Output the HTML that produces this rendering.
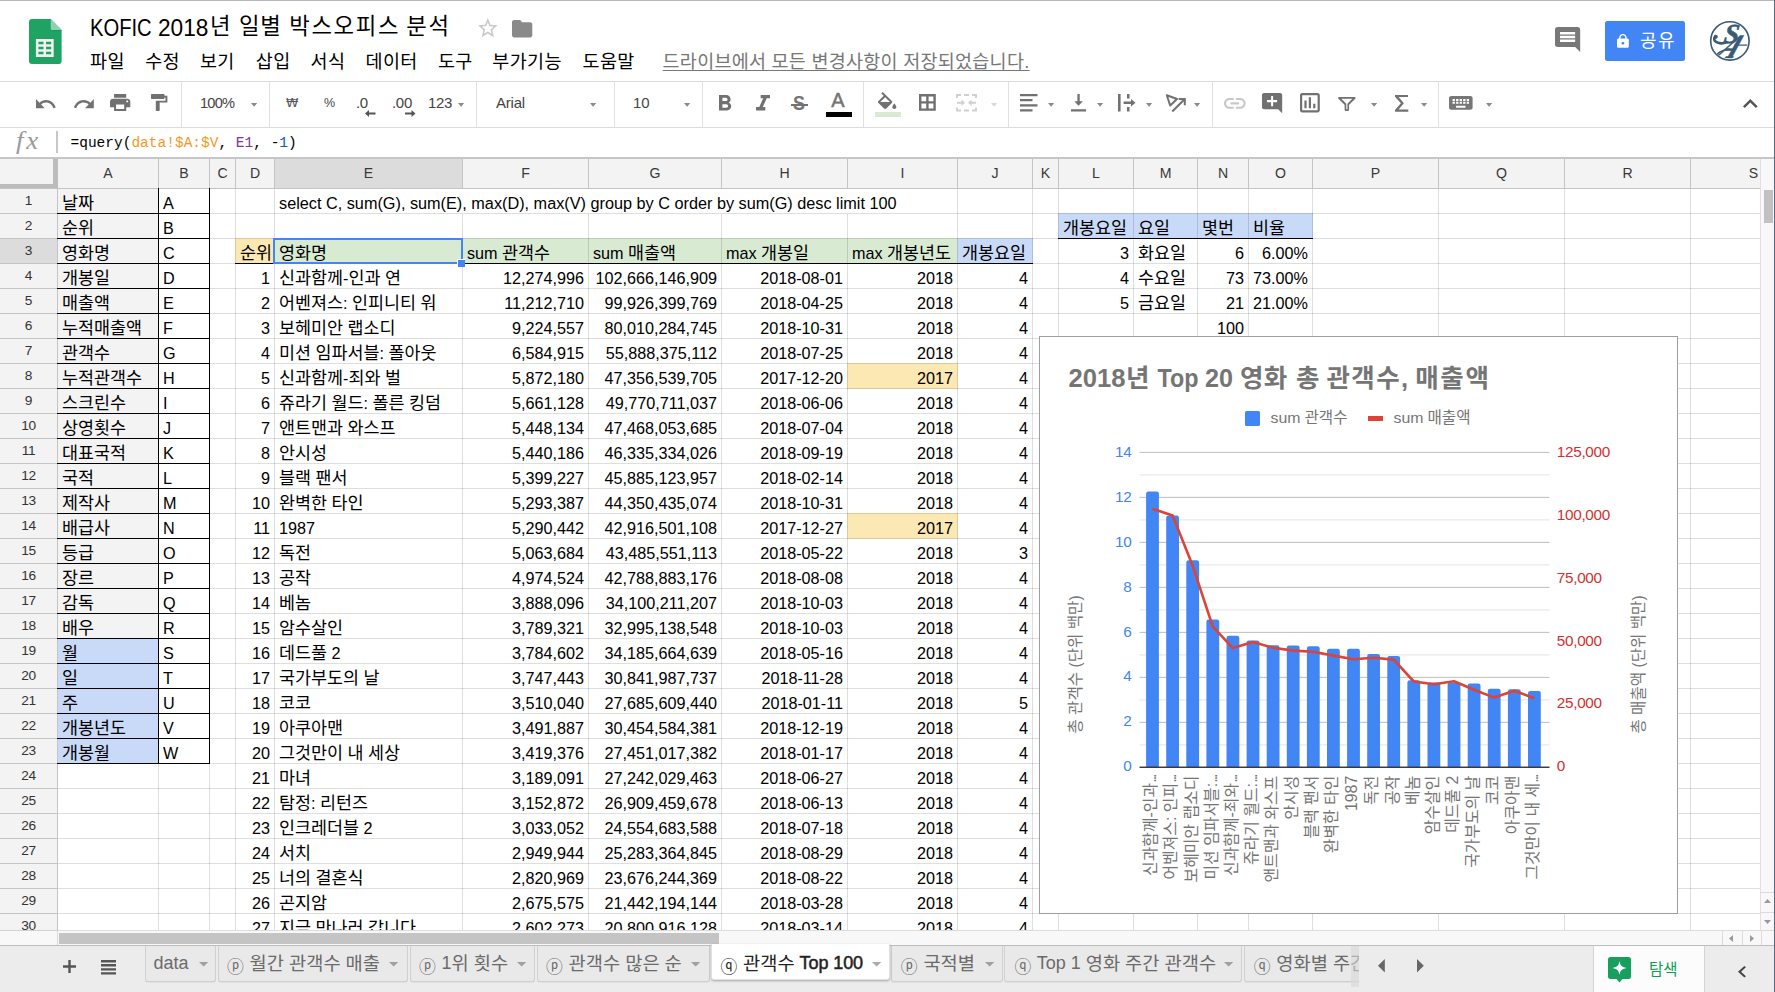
<!DOCTYPE html>
<html lang="ko"><head><meta charset="utf-8"><title>KOFIC 2018년 일별 박스오피스 분석</title>
<style>
*{box-sizing:border-box;margin:0;padding:0}
html,body{width:1775px;height:992px;overflow:hidden;background:#fff}
body{position:relative;font-family:"Liberation Sans","Noto Sans CJK KR",sans-serif;color:#000}
.ic{position:absolute;display:block;overflow:visible}
.a{position:absolute}
.t{position:absolute;white-space:nowrap}
/* cell text */
.c{position:absolute;height:25px;line-height:25px;font-size:16.2px;white-space:nowrap;padding:2px 4px 0 4px;overflow:visible}
.c.r{text-align:right}
.c.m{text-align:center}
.k{font-size:17.4px;line-height:0}
.f{position:absolute}
.vl{position:absolute;width:1px;background:rgba(0,0,0,.13)}
.hl{position:absolute;height:1px;background:rgba(0,0,0,.13)}
.bk{position:absolute;background:#000}
.ch{position:absolute;top:158px;height:30px;line-height:30px;text-align:center;font-size:15px;color:#383838;transform:scaleX(.94)}
.rh{position:absolute;left:0;width:57px;height:25px;line-height:23px;text-align:center;font-size:13.7px;letter-spacing:-.35px;color:#333}
.mn{position:absolute;top:49px;height:26px;line-height:26px;font-size:18.5px;letter-spacing:.35px;color:#000;white-space:nowrap}
.mn .k,.ttl .k{font-size:inherit}
.tab{position:absolute;top:945px;height:37px;background:#e9e9e9;border:1px solid #d0d0d0;border-top:none;border-radius:0 0 3px 3px;box-shadow:0 1px 0 rgba(0,0,0,.05)}
.tab.on{background:#fff;border-color:#e0e0e0;height:36px;top:944px;box-shadow:0 1px 2.5px rgba(0,0,0,.3)}
.tt{position:absolute;top:945px;height:37px;line-height:37px;font-size:18px;color:#666;white-space:nowrap}
.tt .k{font-size:18.7px;line-height:0;position:relative;top:1px}
.tt .o{position:relative;top:3.5px;line-height:0;font-size:16.8px;margin-right:.8px}
.tt b{letter-spacing:-.1px;font-weight:normal;-webkit-text-stroke:.5px #222}
</style></head>
<body>
<div class="a" style="left:0;top:0;width:1775px;height:1px;background:#b4b8bd"></div>
<svg class="ic" style="left:28.700px;top:19px" width="32.600" height="45" viewBox="0 0 33 45" preserveAspectRatio="none">
<path d="M3 0H22L33 11V42a3 3 0 0 1-3 3H3a3 3 0 0 1-3-3V3a3 3 0 0 1 3-3z" fill="#1ea362"/>
<path d="M22 0L33 11H23.5a1.5 1.5 0 0 1-1.5-1.5z" fill="#8ed1b1"/>
<path d="M22.5 11H33v1H23z" fill="#17865a" opacity=".5"/>
<path d="M7 20H25V38H7zM9.5 22.7v2.6h5.2v-2.6zM17.2 22.7v2.6h5.3v-2.6zM9.5 27.7v2.6h5.2v-2.6zM17.2 27.7v2.6h5.3v-2.6zM9.5 32.7v2.6h5.2v-2.6zM17.2 32.7v2.6h5.3v-2.6z" fill="#f1f1f1" fill-rule="evenodd"/>
</svg>
<div class="a ttl" style="left:0;top:0;color:#000"><span class="t" style="left:90.3px;top:12.7px;height:30px;line-height:30px;font-size:23px;letter-spacing:0px;transform:scaleX(0.878);transform-origin:0 0;">KOFIC</span> <span class="t" style="left:157.8px;top:12.7px;height:30px;line-height:30px;font-size:23px;letter-spacing:0px;transform:scaleX(0.985);transform-origin:0 0;">2018</span><span class="t" style="left:210px;top:12.3px;height:30px;line-height:30px;font-size:22.3px;letter-spacing:0.7px;">년</span> <span class="t" style="left:239px;top:12.3px;height:30px;line-height:30px;font-size:22.3px;letter-spacing:0.7px;">일별</span> <span class="t" style="left:289.3px;top:12.3px;height:30px;line-height:30px;font-size:22.3px;letter-spacing:1.65px;">박스오피스</span> <span class="t" style="left:406.3px;top:12.3px;height:30px;line-height:30px;font-size:22.3px;letter-spacing:1.6px;">분석</span></div>
<svg class="ic" style="left:478px;top:18.3px" width="19.6" height="19.2" viewBox="2.00 2.00 20.00 19.00" preserveAspectRatio="none"><path d="M22 9.24l-7.19-.62L12 2 9.19 8.63 2 9.24l5.46 4.73L5.82 21 12 17.27 18.18 21l-1.63-7.03L22 9.24zM12 15.4l-3.76 2.27 1-4.28-3.32-2.88 4.38-.38L12 6.1l1.71 4.04 4.38.38-3.32 2.88 1 4.28L12 15.4z" fill="#c9c9c9"/></svg><svg class="ic" style="left:512px;top:19.7px" width="20.3" height="17.4" viewBox="2.00 4.00 20.00 16.00" preserveAspectRatio="none"><path d="M10 4H4c-1.1 0-1.99.9-1.99 2L2 18c0 1.1.9 2 2 2h16c1.1 0 2-.9 2-2V8c0-1.1-.9-2-2-2h-8l-2-2z" fill="#8a8a8a"/></svg>
<div class="mn" style="left:90.1px">파일</div><div class="mn" style="left:145.2px">수정</div><div class="mn" style="left:200.0px">보기</div><div class="mn" style="left:255.8px">삽입</div><div class="mn" style="left:310.6px">서식</div><div class="mn" style="left:365.6px">데이터</div><div class="mn" style="left:438.0px">도구</div><div class="mn" style="left:492.3px">부가기능</div><div class="mn" style="left:582.6px">도움말</div><div class="mn" id="saved" style="left:662.6px;letter-spacing:.25px;color:#777;text-decoration:underline;text-underline-offset:2px">드라이브에서 모든 변경사항이 저장되었습니다.</div>
<svg class="ic" style="left:1554.6px;top:27.4px" width="25.2" height="25.0" viewBox="2.00 2.00 20.00 20.00" preserveAspectRatio="none"><path d="M21.99 4c0-1.1-.89-2-1.99-2H4c-1.1 0-2 .9-2 2v12c0 1.1.9 2 2 2h14l4 4-.01-18zM18 14H6v-2h12v2zm0-3H6V9h12v2zm0-3H6V6h12v2z" fill="#787878"/></svg><div class="a" style="left:1605px;top:21px;width:80px;height:40px;background:#4285f4;border-radius:2.5px"></div><svg class="ic" style="left:1617px;top:34px" width="11.8" height="13.8" viewBox="4.00 1.00 16.00 21.00" preserveAspectRatio="none"><path d="M18 8h-1V6c0-2.76-2.24-5-5-5S7 3.24 7 6v2H6c-1.1 0-2 .9-2 2v10c0 1.1.9 2 2 2h12c1.1 0 2-.9 2-2V10c0-1.1-.9-2-2-2zm-6 9c-1.1 0-2-.9-2-2s.9-2 2-2 2 .9 2 2-.9 2-2 2zm3.1-9H8.9V6c0-1.71 1.39-3.1 3.1-3.1 1.71 0 3.1 1.39 3.1 3.1v2z" fill="#fff"/></svg><div class="t" style="left:1640px;top:28px;height:26px;line-height:26px;font-size:18px;color:#fff;letter-spacing:1.4px">공유</div>
<svg class="ic" style="left:1709px;top:20px" width="42" height="42" viewBox="0 0 42 42">
<circle cx="20.900" cy="20.900" r="19.200" fill="#fff" stroke="#3b5a75" stroke-width="1.600"/></svg>
<div class="a" style="left:1711.300px;top:22.300px;width:37.200px;height:37.200px;border-radius:50%;overflow:hidden">
<svg class="ic" style="left:-2.300px;top:-2.300px" width="42" height="42" viewBox="0 0 42 42">
<g font-family="Liberation Serif, serif" font-weight="bold" fill="#3b5a75" stroke="#3b5a75" stroke-width=".5">
<text transform="translate(14 23.300) skewX(-8)" font-style="italic" font-size="27.500">S</text>
<text transform="translate(4.500 38.400) skewX(-40) scale(.78 1)" font-size="34">A</text></g>
<g fill="none" stroke="#3b5a75" stroke-linecap="round">
<path d="M18 22.300C12 24.500 4.500 23 5.300 18" stroke-width="2.600"/>
<circle cx="6.700" cy="16.800" r="2.100" fill="#3b5a75" stroke="none"/>
<path d="M8 36.500C7 33.500 13 29.800 20 29.300" stroke-width="1.500"/>
<path d="M26 25.100H39.500" stroke-width="1.300"/></g>
</svg></div>
<div class="a" style="left:0;top:81px;width:1775px;height:1px;background:#dcdcdc"></div><div class="a" style="left:0;top:127px;width:1775px;height:1px;background:#dcdcdc"></div><div class="a" style="left:181px;top:82px;width:1px;height:45px;background:#e0e0e0"></div><div class="a" style="left:269px;top:82px;width:1px;height:45px;background:#e0e0e0"></div><div class="a" style="left:476px;top:82px;width:1px;height:45px;background:#e0e0e0"></div><div class="a" style="left:614px;top:82px;width:1px;height:45px;background:#e0e0e0"></div><div class="a" style="left:702px;top:82px;width:1px;height:45px;background:#e0e0e0"></div><div class="a" style="left:863px;top:82px;width:1px;height:45px;background:#e0e0e0"></div><div class="a" style="left:1008px;top:82px;width:1px;height:45px;background:#e0e0e0"></div><div class="a" style="left:1212px;top:82px;width:1px;height:45px;background:#e0e0e0"></div><div class="a" style="left:1438px;top:82px;width:1px;height:45px;background:#e0e0e0"></div>
<svg class="ic" style="left:35.7px;top:98.8px" width="19.7" height="9.2" viewBox="2.00 7.00 20.47 9.00" preserveAspectRatio="none"><path d="M12.5 8c-2.65 0-5.05.99-6.9 2.6L2 7v9h9l-3.62-3.62c1.39-1.16 3.16-1.88 5.12-1.88 3.54 0 6.55 2.31 7.6 5.5l2.37-.78C21.08 11.03 17.15 8 12.5 8z" fill="#717171"/></svg><svg class="ic" style="left:73.5px;top:98.8px" width="19.8" height="9.2" viewBox="1.54 7.00 20.46 9.00" preserveAspectRatio="none"><path d="M18.4 10.6C16.55 8.99 14.15 8 11.5 8c-4.65 0-8.58 3.03-9.96 7.22L3.9 16c1.05-3.19 4.05-5.5 7.6-5.5 1.95 0 3.73.72 5.12 1.88L13 16h9V7l-3.6 3.6z" fill="#717171"/></svg><svg class="ic" style="left:110px;top:94px" width="20.3" height="17.0" viewBox="2.00 3.00 20.00 18.00" preserveAspectRatio="none"><path d="M19 8H5c-1.66 0-3 1.34-3 3v6h4v4h12v-4h4v-6c0-1.66-1.34-3-3-3zm-3 11H8v-5h8v5zm3-7c-.55 0-1-.45-1-1s.45-1 1-1 1 .45 1 1-.45 1-1 1zm-1-9H6v4h12V3z" fill="#717171"/></svg><svg class="ic" style="left:150.6px;top:94px" width="16.4" height="17.0" viewBox="4.00 2.00 17.00 20.00" preserveAspectRatio="none"><path d="M18 4V3c0-.55-.45-1-1-1H5c-.55 0-1 .45-1 1v4c0 .55.45 1 1 1h12c.55 0 1-.45 1-1V6h1v4H9v11c0 .55.45 1 1 1h2c.55 0 1-.45 1-1v-9h8V4h-3z" fill="#717171"/></svg><div class="t" style="left:200px;top:91px;height:24px;line-height:24px;font-size:14.6px;color:#444;letter-spacing:-.8px">100%</div><svg class="ic" style="left:251px;top:102.6px" width="6.2" height="3.8" viewBox="0 0 10 5" preserveAspectRatio="none"><path d="M0 0h10L5 5z" fill="#8a8a8a"/></svg><div class="t" style="left:286px;top:91px;height:24px;line-height:24px;font-size:15px;color:#555;font-family:'DejaVu Sans',sans-serif;font-size:12.5px">₩</div><div class="t" style="left:324px;top:91px;height:24px;line-height:24px;font-size:15px;color:#444;font-size:12.5px">%</div><div class="t" style="left:356px;top:91px;height:24px;line-height:24px;font-size:15px;color:#444;letter-spacing:-.3px">.0</div><svg class="ic" style="left:364.500px;top:109.500px" width="10.500" height="7" viewBox="0 0 10.500 7"><path d="M10.500 2.600H4V0L0 3.500l4 3.500V4.400H10.500z" fill="#555"/></svg><div class="t" style="left:392px;top:91px;height:24px;line-height:24px;font-size:15px;color:#444;letter-spacing:-.3px">.00</div><svg class="ic" style="left:404.500px;top:109.500px" width="10.500" height="7" viewBox="0 0 10.500 7"><path d="M0 2.600H6.500V0L10.500 3.500 6.500 7V4.400H0z" fill="#555"/></svg><div class="t" style="left:428px;top:91px;height:24px;line-height:24px;font-size:15px;color:#444;letter-spacing:-.3px">123</div><svg class="ic" style="left:457.8px;top:102.6px" width="6.2" height="3.8" viewBox="0 0 10 5" preserveAspectRatio="none"><path d="M0 0h10L5 5z" fill="#8a8a8a"/></svg><div class="t" style="left:496px;top:91px;height:24px;line-height:24px;font-size:15px;color:#444;letter-spacing:-.2px">Arial</div><svg class="ic" style="left:590.3px;top:102.6px" width="6.2" height="3.8" viewBox="0 0 10 5" preserveAspectRatio="none"><path d="M0 0h10L5 5z" fill="#8a8a8a"/></svg><div class="t" style="left:633px;top:91px;height:24px;line-height:24px;font-size:15px;color:#444;">10</div><svg class="ic" style="left:683.6px;top:102.6px" width="6.2" height="3.8" viewBox="0 0 10 5" preserveAspectRatio="none"><path d="M0 0h10L5 5z" fill="#8a8a8a"/></svg>
<svg class="ic" style="left:718.8px;top:95.3px" width="12.2" height="15.4" viewBox="7.00 4.00 10.75 14.00" preserveAspectRatio="none"><path d="M15.6 10.79c.97-.67 1.65-1.77 1.65-2.79 0-2.26-1.75-4-4-4H7v14h7.04c2.09 0 3.71-1.7 3.71-3.79 0-1.52-.86-2.82-2.15-3.42zM10 6.5h3c.83 0 1.5.67 1.5 1.5s-.67 1.5-1.5 1.5h-3v-3zm3.5 9H10v-3h3.5c.83 0 1.5.67 1.5 1.5s-.67 1.5-1.5 1.5z" fill="#717171"/></svg><svg class="ic" style="left:755.6px;top:95.3px" width="14.0" height="15.4" viewBox="6.00 4.00 12.00 14.00" preserveAspectRatio="none"><path d="M10 4v3h2.21l-3.42 8H6v3h8v-3h-2.21l3.42-8H18V4z" fill="#717171"/></svg><div class="t" style="left:792.8px;top:90.5px;height:24px;line-height:24px;font-size:19.5px;font-weight:bold;color:#757575;transform:scaleX(.92);transform-origin:0 0">S</div><div class="a" style="left:791.3px;top:103.5px;width:17px;height:2.2px;background:#717171"></div><div class="t" style="left:831.2px;top:88px;height:24px;line-height:24px;font-size:20px;color:#737373;-webkit-text-stroke:.45px #737373">A</div><div class="a" style="left:826.4px;top:112.3px;width:25.4px;height:4.3px;background:#000"></div><svg class="ic" style="left:878.3px;top:92px" width="18.4" height="17.0" viewBox="3.00 0.00 18.00 17.00" preserveAspectRatio="none"><path d="M16.56 8.94L7.62 0 6.21 1.41l2.38 2.38-5.15 5.15c-.59.59-.59 1.54 0 2.12l5.5 5.5c.29.29.68.44 1.06.44s.77-.15 1.06-.44l5.5-5.5c.59-.58.59-1.53 0-2.12zM5.21 10L10 5.21 14.79 10H5.21zM19 11.5s-2 2.17-2 3.5c0 1.1.9 2 2 2s2-.9 2-2c0-1.33-2-3.5-2-3.5z" fill="#717171"/></svg><div class="a" style="left:874.8px;top:112.3px;width:26px;height:4.3px;background:#d9ead3"></div><svg class="ic" style="left:919.400px;top:94.300px" width="16.800" height="16.800" viewBox="0 0 16.800 16.800"><path d="M0 0H16.800V16.800H0zM2.400 2.400V7.200H7.200V2.400zM9.600 2.400V7.200H14.400V2.400zM2.400 9.600V14.400H7.200V9.600zM9.600 9.600V14.400H14.400V9.600z" fill="#717171" fill-rule="evenodd"/></svg><svg class="ic" style="left:956px;top:94px" width="21" height="17.5" viewBox="0 0 21 17.5"><g fill="none" stroke="#d0d0d0" stroke-width="1.8">
<path d="M1 4V1H5M8 1h5M16 1h4V4M1 13.5v3H5M8 16.500h5M16 16.5h4v-3"/><path d="M1 8.75H7M20 8.750H14"/></g>
<path d="M5.500 5.500L9 8.750 5.500 12zM15.500 5.500L12 8.750 15.500 12z" fill="#d0d0d0"/></svg><svg class="ic" style="left:991.4px;top:102.6px" width="6.2" height="3.8" viewBox="0 0 10 5" preserveAspectRatio="none"><path d="M0 0h10L5 5z" fill="#d8d8d8"/></svg><svg class="ic" style="left:1020.400px;top:94px" width="17.500" height="17.500" viewBox="0 0 17.500 17.500"><path d="M0 0h17.500v2.250H0zM0 5.080h12.500v2.250H0zM0 10.160h17.500v2.250H0zM0 15.240h12.500v2.250H0z" fill="#717171"/></svg><svg class="ic" style="left:1048px;top:102.6px" width="6.2" height="3.8" viewBox="0 0 10 5" preserveAspectRatio="none"><path d="M0 0h10L5 5z" fill="#8a8a8a"/></svg><svg class="ic" style="left:1070.800px;top:94px" width="15" height="17.500" viewBox="0 0 15 17.500"><path d="M6.400 0h2.300v7.200h3.100L7.550 11.800 3.300 7.200h3.100zM0 15.200h15v2.300H0z" fill="#717171"/></svg><svg class="ic" style="left:1096.8px;top:102.6px" width="6.2" height="3.8" viewBox="0 0 10 5" preserveAspectRatio="none"><path d="M0 0h10L5 5z" fill="#8a8a8a"/></svg><svg class="ic" style="left:1118.200px;top:94px" width="17.500" height="17.500" viewBox="0 0 17.500 17.500"><path d="M0 0h2.600v17.500H0zM9 0h2.500v4.500H9zM9 13h2.500v4.500H9zM5.600 7.400h7.400V5l4.500 3.700L13 12.400V10H5.600z" fill="#717171"/></svg><svg class="ic" style="left:1145.5px;top:102.6px" width="6.2" height="3.8" viewBox="0 0 10 5" preserveAspectRatio="none"><path d="M0 0h10L5 5z" fill="#8a8a8a"/></svg><svg class="ic" style="left:1165px;top:93px" width="21" height="19.500" viewBox="0 0 21 19.500"><g fill="none" stroke="#717171" stroke-width="2"><path d="M1.800 2.300L12 6 5.200 12.500z" stroke-linejoin="round"/><path d="M7.300 18.500L19 6.800"/><path d="M13.600 6H19.800V12.200"/></g></svg><svg class="ic" style="left:1194px;top:102.6px" width="6.2" height="3.8" viewBox="0 0 10 5" preserveAspectRatio="none"><path d="M0 0h10L5 5z" fill="#8a8a8a"/></svg><svg class="ic" style="left:1224px;top:98px" width="21.6" height="10.8" viewBox="2.00 7.00 20.00 10.00" preserveAspectRatio="none"><path d="M3.9 12c0-1.71 1.39-3.1 3.1-3.1h4V7H7c-2.76 0-5 2.24-5 5s2.24 5 5 5h4v-1.9H7c-1.71 0-3.1-1.39-3.1-3.1zM8 13h8v-2H8v2zm9-6h-4v1.9h4c1.71 0 3.1 1.39 3.1 3.1s-1.39 3.1-3.1 3.1h-4V17h4c2.76 0 5-2.24 5-5s-2.24-5-5-5z" fill="#c8c8c8"/></svg><svg class="ic" style="left:1261.8px;top:93.4px" width="20.2" height="20.3" viewBox="2.00 2.00 20.00 20.00" preserveAspectRatio="none"><path d="M21.99 4c0-1.1-.89-2-1.99-2H4c-1.1 0-2 .9-2 2v12c0 1.1.9 2 2 2h14l4 4-.01-18zM17 11h-4v4h-2v-4H7V9h4V5h2v4h4v2z" fill="#717171"/></svg><svg class="ic" style="left:1300.2px;top:93.4px" width="19.8" height="19.5" viewBox="3.00 3.00 18.00 18.00" preserveAspectRatio="none"><path d="M9 17H7v-7h2v7zm4 0h-2V7h2v10zm4 0h-2v-4h2v4zm2 2H5V5h14v14zm0-16H5c-1.1 0-2 .9-2 2v14c0 1.1.9 2 2 2h14c1.1 0 2-.9 2-2V5c0-1.1-.9-2-2-2z" fill="#717171"/></svg><svg class="ic" style="left:1338.3px;top:96.6px" width="17.7" height="13.9" viewBox="4.04 4.00 15.91 16.00" preserveAspectRatio="none"><path d="M4.25 5.61C6.27 8.2 10 13 10 13v6c0 .55.45 1 1 1h2c.55 0 1-.45 1-1v-6s3.72-4.8 5.74-7.39A.998.998 0 0 0 18.95 4H5.04c-.83 0-1.3.95-.79 1.61zM7.1 6h9.8L12.5 11.7v6.3h-1v-6.3L7.1 6z" fill="#717171" fill-rule="evenodd"/></svg><svg class="ic" style="left:1371.3px;top:102.6px" width="6.2" height="3.8" viewBox="0 0 10 5" preserveAspectRatio="none"><path d="M0 0h10L5 5z" fill="#8a8a8a"/></svg><svg class="ic" style="left:1395px;top:94.600px" width="13.300" height="16.700" viewBox="0 0 13.300 16.700"><path d="M0 0H13V2.100H3.600L8.900 8.300 3.600 14.600H13.300V16.700H0V15L5.900 8.300 0 1.700z" fill="#717171"/></svg><svg class="ic" style="left:1421px;top:102.6px" width="6.2" height="3.8" viewBox="0 0 10 5" preserveAspectRatio="none"><path d="M0 0h10L5 5z" fill="#8a8a8a"/></svg><svg class="ic" style="left:1449.4px;top:96px" width="23.6" height="13.7" viewBox="2.00 5.00 20.00 14.00" preserveAspectRatio="none"><path d="M20 5H4c-1.1 0-1.99.9-1.99 2L2 17c0 1.1.9 2 2 2h16c1.1 0 2-.9 2-2V7c0-1.1-.9-2-2-2zm-9 3h2v2h-2V8zm0 3h2v2h-2v-2zM8 8h2v2H8V8zm0 3h2v2H8v-2zm-1 2H5v-2h2v2zm0-3H5V8h2v2zm9 7H8v-2h8v2zm0-4h-2v-2h2v2zm0-3h-2V8h2v2zm3 3h-2v-2h2v2zm0-3h-2V8h2v2z" fill="#777"/></svg><svg class="ic" style="left:1485.7px;top:102.6px" width="6.2" height="3.8" viewBox="0 0 10 5" preserveAspectRatio="none"><path d="M0 0h10L5 5z" fill="#8a8a8a"/></svg><svg class="ic" style="left:1743px;top:99px" width="14.6" height="9.0" viewBox="6.00 8.00 12.00 7.41" preserveAspectRatio="none"><path d="M12 8l-6 6 1.41 1.41L12 10.83l4.59 4.58L18 14z" fill="#555"/></svg>
<div class="t" style="left:16.2px;top:126px;height:30px;line-height:30px;font-family:'Liberation Serif',serif;font-style:italic;font-size:24.5px;color:#999;letter-spacing:2.5px;transform:scaleX(1.1);transform-origin:0 0">fx</div><div class="a" style="left:56px;top:131px;width:1.5px;height:22px;background:#c8c8c8"></div><div class="t" id="fx" style="left:70.5px;top:132px;height:22px;line-height:22px;font-family:'Liberation Mono',monospace;font-size:14.5px;color:#000">=query(<span style="color:#f7981d">data!$A:$V</span>, <span style="color:#7e3794">E1</span>, -<span style="color:#11a9cc;color:#1155cc">1</span>)</div>
<div class="a" style="left:0;top:157px;width:1774px;height:2px;background:#c6c6c6"></div><div class="a" id="grid" style="left:0;top:157px;width:1760px;height:773px;overflow:hidden">
<div class="a" style="left:0;top:0;width:1775px;height:2px;background:#c6c6c6"></div><div class="a" style="left:0;top:2px;width:1760px;height:29px;background:#f3f3f3"></div><div class="a" style="left:0;top:31px;width:57px;height:742px;background:#f3f3f3"></div><div class="a" style="left:275px;top:2px;width:187px;height:29px;background:#dcdcdc"></div><div class="a" style="left:0;top:82px;width:57px;height:24px;background:#dcdcdc"></div><div class="a" style="left:53px;top:2px;width:5px;height:29px;background:#bcbcbc"></div><div class="a" style="left:0;top:27px;width:57px;height:4px;background:#bcbcbc"></div>
<div class="f" style="left:57px;top:31px;width:102px;height:451px;background:#f3f3f3"></div><div class="f" style="left:57px;top:481px;width:102px;height:126px;background:#c9daf8"></div><div class="f" style="left:235px;top:81px;width:40px;height:26px;background:#fce8b2"></div><div class="f" style="left:274px;top:81px;width:684px;height:26px;background:#d9ead3"></div><div class="f" style="left:957px;top:81px;width:76px;height:26px;background:#c9daf8"></div><div class="f" style="left:1058px;top:56px;width:255px;height:26px;background:#c9daf8"></div><div class="f" style="left:847px;top:206px;width:111px;height:26px;background:#fce8b2"></div><div class="f" style="left:847px;top:356px;width:111px;height:26px;background:#fce8b2"></div>
<div class="vl" style="left:158px;top:2px;height:29px;background:#c4c4c4"></div><div class="vl" style="left:209px;top:2px;height:29px;background:#c4c4c4"></div><div class="vl" style="left:235px;top:2px;height:29px;background:#c4c4c4"></div><div class="vl" style="left:274px;top:2px;height:29px;background:#c4c4c4"></div><div class="vl" style="left:462px;top:2px;height:29px;background:#c4c4c4"></div><div class="vl" style="left:588px;top:2px;height:29px;background:#c4c4c4"></div><div class="vl" style="left:721px;top:2px;height:29px;background:#c4c4c4"></div><div class="vl" style="left:847px;top:2px;height:29px;background:#c4c4c4"></div><div class="vl" style="left:957px;top:2px;height:29px;background:#c4c4c4"></div><div class="vl" style="left:1032px;top:2px;height:29px;background:#c4c4c4"></div><div class="vl" style="left:1058px;top:2px;height:29px;background:#c4c4c4"></div><div class="vl" style="left:1133px;top:2px;height:29px;background:#c4c4c4"></div><div class="vl" style="left:1197px;top:2px;height:29px;background:#c4c4c4"></div><div class="vl" style="left:1248px;top:2px;height:29px;background:#c4c4c4"></div><div class="vl" style="left:1312px;top:2px;height:29px;background:#c4c4c4"></div><div class="vl" style="left:1438px;top:2px;height:29px;background:#c4c4c4"></div><div class="vl" style="left:1564px;top:2px;height:29px;background:#c4c4c4"></div><div class="vl" style="left:1690px;top:2px;height:29px;background:#c4c4c4"></div><div class="vl" style="left:57px;top:31px;height:742px;background:#c4c4c4"></div><div class="hl" style="left:0;top:31px;width:1760px;background:#c4c4c4"></div><div class="hl" style="left:0;top:56px;width:57px;background:#c4c4c4"></div><div class="hl" style="left:0;top:81px;width:57px;background:#c4c4c4"></div><div class="hl" style="left:0;top:106px;width:57px;background:#c4c4c4"></div><div class="hl" style="left:0;top:131px;width:57px;background:#c4c4c4"></div><div class="hl" style="left:0;top:156px;width:57px;background:#c4c4c4"></div><div class="hl" style="left:0;top:181px;width:57px;background:#c4c4c4"></div><div class="hl" style="left:0;top:206px;width:57px;background:#c4c4c4"></div><div class="hl" style="left:0;top:231px;width:57px;background:#c4c4c4"></div><div class="hl" style="left:0;top:256px;width:57px;background:#c4c4c4"></div><div class="hl" style="left:0;top:281px;width:57px;background:#c4c4c4"></div><div class="hl" style="left:0;top:306px;width:57px;background:#c4c4c4"></div><div class="hl" style="left:0;top:331px;width:57px;background:#c4c4c4"></div><div class="hl" style="left:0;top:356px;width:57px;background:#c4c4c4"></div><div class="hl" style="left:0;top:381px;width:57px;background:#c4c4c4"></div><div class="hl" style="left:0;top:406px;width:57px;background:#c4c4c4"></div><div class="hl" style="left:0;top:431px;width:57px;background:#c4c4c4"></div><div class="hl" style="left:0;top:456px;width:57px;background:#c4c4c4"></div><div class="hl" style="left:0;top:481px;width:57px;background:#c4c4c4"></div><div class="hl" style="left:0;top:506px;width:57px;background:#c4c4c4"></div><div class="hl" style="left:0;top:531px;width:57px;background:#c4c4c4"></div><div class="hl" style="left:0;top:556px;width:57px;background:#c4c4c4"></div><div class="hl" style="left:0;top:581px;width:57px;background:#c4c4c4"></div><div class="hl" style="left:0;top:606px;width:57px;background:#c4c4c4"></div><div class="hl" style="left:0;top:631px;width:57px;background:#c4c4c4"></div><div class="hl" style="left:0;top:656px;width:57px;background:#c4c4c4"></div><div class="hl" style="left:0;top:681px;width:57px;background:#c4c4c4"></div><div class="hl" style="left:0;top:706px;width:57px;background:#c4c4c4"></div><div class="hl" style="left:0;top:731px;width:57px;background:#c4c4c4"></div><div class="hl" style="left:0;top:756px;width:57px;background:#c4c4c4"></div><div class="hl" style="left:0;top:781px;width:57px;background:#c4c4c4"></div>
<div class="vl" style="left:158px;top:32px;height:741px"></div><div class="vl" style="left:209px;top:32px;height:741px"></div><div class="vl" style="left:235px;top:32px;height:741px"></div><div class="vl" style="left:274px;top:32px;height:741px"></div><div class="vl" style="left:462px;top:57px;height:717px"></div><div class="vl" style="left:588px;top:57px;height:717px"></div><div class="vl" style="left:721px;top:57px;height:717px"></div><div class="vl" style="left:847px;top:57px;height:717px"></div><div class="vl" style="left:957px;top:32px;height:741px"></div><div class="vl" style="left:1032px;top:32px;height:741px"></div><div class="vl" style="left:1058px;top:32px;height:741px"></div><div class="vl" style="left:1133px;top:32px;height:741px"></div><div class="vl" style="left:1197px;top:32px;height:741px"></div><div class="vl" style="left:1248px;top:32px;height:741px"></div><div class="vl" style="left:1312px;top:32px;height:741px"></div><div class="vl" style="left:1438px;top:32px;height:741px"></div><div class="vl" style="left:1564px;top:32px;height:741px"></div><div class="vl" style="left:1690px;top:32px;height:741px"></div><div class="hl" style="left:58px;top:56px;width:1702px"></div><div class="hl" style="left:58px;top:81px;width:1702px"></div><div class="hl" style="left:58px;top:106px;width:1702px"></div><div class="hl" style="left:58px;top:131px;width:1702px"></div><div class="hl" style="left:58px;top:156px;width:1702px"></div><div class="hl" style="left:58px;top:181px;width:1702px"></div><div class="hl" style="left:58px;top:206px;width:1702px"></div><div class="hl" style="left:58px;top:231px;width:1702px"></div><div class="hl" style="left:58px;top:256px;width:1702px"></div><div class="hl" style="left:58px;top:281px;width:1702px"></div><div class="hl" style="left:58px;top:306px;width:1702px"></div><div class="hl" style="left:58px;top:331px;width:1702px"></div><div class="hl" style="left:58px;top:356px;width:1702px"></div><div class="hl" style="left:58px;top:381px;width:1702px"></div><div class="hl" style="left:58px;top:406px;width:1702px"></div><div class="hl" style="left:58px;top:431px;width:1702px"></div><div class="hl" style="left:58px;top:456px;width:1702px"></div><div class="hl" style="left:58px;top:481px;width:1702px"></div><div class="hl" style="left:58px;top:506px;width:1702px"></div><div class="hl" style="left:58px;top:531px;width:1702px"></div><div class="hl" style="left:58px;top:556px;width:1702px"></div><div class="hl" style="left:58px;top:581px;width:1702px"></div><div class="hl" style="left:58px;top:606px;width:1702px"></div><div class="hl" style="left:58px;top:631px;width:1702px"></div><div class="hl" style="left:58px;top:656px;width:1702px"></div><div class="hl" style="left:58px;top:681px;width:1702px"></div><div class="hl" style="left:58px;top:706px;width:1702px"></div><div class="hl" style="left:58px;top:731px;width:1702px"></div><div class="hl" style="left:58px;top:756px;width:1702px"></div><div class="hl" style="left:58px;top:781px;width:1702px"></div>
<div class="bk" style="left:158px;top:31px;width:1px;height:576px"></div><div class="bk" style="left:209px;top:31px;width:1px;height:576px"></div><div class="bk" style="left:57px;top:56px;width:153px;height:1px"></div><div class="bk" style="left:57px;top:81px;width:153px;height:1px"></div><div class="bk" style="left:57px;top:106px;width:153px;height:1px"></div><div class="bk" style="left:57px;top:131px;width:153px;height:1px"></div><div class="bk" style="left:57px;top:156px;width:153px;height:1px"></div><div class="bk" style="left:57px;top:181px;width:153px;height:1px"></div><div class="bk" style="left:57px;top:206px;width:153px;height:1px"></div><div class="bk" style="left:57px;top:231px;width:153px;height:1px"></div><div class="bk" style="left:57px;top:256px;width:153px;height:1px"></div><div class="bk" style="left:57px;top:281px;width:153px;height:1px"></div><div class="bk" style="left:57px;top:306px;width:153px;height:1px"></div><div class="bk" style="left:57px;top:331px;width:153px;height:1px"></div><div class="bk" style="left:57px;top:356px;width:153px;height:1px"></div><div class="bk" style="left:57px;top:381px;width:153px;height:1px"></div><div class="bk" style="left:57px;top:406px;width:153px;height:1px"></div><div class="bk" style="left:57px;top:431px;width:153px;height:1px"></div><div class="bk" style="left:57px;top:456px;width:153px;height:1px"></div><div class="bk" style="left:57px;top:481px;width:153px;height:1px"></div><div class="bk" style="left:57px;top:506px;width:153px;height:1px"></div><div class="bk" style="left:57px;top:531px;width:153px;height:1px"></div><div class="bk" style="left:57px;top:556px;width:153px;height:1px"></div><div class="bk" style="left:57px;top:581px;width:153px;height:1px"></div><div class="bk" style="left:57px;top:606px;width:153px;height:1px"></div><div class="bk" style="left:235px;top:106px;width:798px;height:1px"></div><div class="bk" style="left:1058px;top:81px;width:255px;height:1px"></div>
<div class="ch" style="left:58px;top:1px;width:100px">A</div><div class="ch" style="left:159px;top:1px;width:50px">B</div><div class="ch" style="left:210px;top:1px;width:25px">C</div><div class="ch" style="left:236px;top:1px;width:38px">D</div><div class="ch" style="left:275px;top:1px;width:187px">E</div><div class="ch" style="left:463px;top:1px;width:125px">F</div><div class="ch" style="left:589px;top:1px;width:132px">G</div><div class="ch" style="left:722px;top:1px;width:125px">H</div><div class="ch" style="left:848px;top:1px;width:109px">I</div><div class="ch" style="left:958px;top:1px;width:74px">J</div><div class="ch" style="left:1033px;top:1px;width:25px">K</div><div class="ch" style="left:1059px;top:1px;width:74px">L</div><div class="ch" style="left:1134px;top:1px;width:63px">M</div><div class="ch" style="left:1198px;top:1px;width:50px">N</div><div class="ch" style="left:1249px;top:1px;width:63px">O</div><div class="ch" style="left:1313px;top:1px;width:125px">P</div><div class="ch" style="left:1439px;top:1px;width:125px">Q</div><div class="ch" style="left:1565px;top:1px;width:125px">R</div><div class="ch" style="left:1691px;top:1px;width:125px">S</div>
<div class="rh" style="top:32px">1</div><div class="rh" style="top:57px">2</div><div class="rh" style="top:82px">3</div><div class="rh" style="top:107px">4</div><div class="rh" style="top:132px">5</div><div class="rh" style="top:157px">6</div><div class="rh" style="top:182px">7</div><div class="rh" style="top:207px">8</div><div class="rh" style="top:232px">9</div><div class="rh" style="top:257px">10</div><div class="rh" style="top:282px">11</div><div class="rh" style="top:307px">12</div><div class="rh" style="top:332px">13</div><div class="rh" style="top:357px">14</div><div class="rh" style="top:382px">15</div><div class="rh" style="top:407px">16</div><div class="rh" style="top:432px">17</div><div class="rh" style="top:457px">18</div><div class="rh" style="top:482px">19</div><div class="rh" style="top:507px">20</div><div class="rh" style="top:532px">21</div><div class="rh" style="top:557px">22</div><div class="rh" style="top:582px">23</div><div class="rh" style="top:607px">24</div><div class="rh" style="top:632px">25</div><div class="rh" style="top:657px">26</div><div class="rh" style="top:682px">27</div><div class="rh" style="top:707px">28</div><div class="rh" style="top:732px">29</div><div class="rh" style="top:757px">30</div>
<div class="c" style="left:58px;top:32px;"><span class="k">날짜</span></div><div class="c" style="left:159px;top:32px;">A</div><div class="c" style="left:58px;top:57px;"><span class="k">순위</span></div><div class="c" style="left:159px;top:57px;">B</div><div class="c" style="left:58px;top:82px;"><span class="k">영화명</span></div><div class="c" style="left:159px;top:82px;">C</div><div class="c" style="left:58px;top:107px;"><span class="k">개봉일</span></div><div class="c" style="left:159px;top:107px;">D</div><div class="c" style="left:58px;top:132px;"><span class="k">매출액</span></div><div class="c" style="left:159px;top:132px;">E</div><div class="c" style="left:58px;top:157px;"><span class="k">누적매출액</span></div><div class="c" style="left:159px;top:157px;">F</div><div class="c" style="left:58px;top:182px;"><span class="k">관객수</span></div><div class="c" style="left:159px;top:182px;">G</div><div class="c" style="left:58px;top:207px;"><span class="k">누적관객수</span></div><div class="c" style="left:159px;top:207px;">H</div><div class="c" style="left:58px;top:232px;"><span class="k">스크린수</span></div><div class="c" style="left:159px;top:232px;">I</div><div class="c" style="left:58px;top:257px;"><span class="k">상영횟수</span></div><div class="c" style="left:159px;top:257px;">J</div><div class="c" style="left:58px;top:282px;"><span class="k">대표국적</span></div><div class="c" style="left:159px;top:282px;">K</div><div class="c" style="left:58px;top:307px;"><span class="k">국적</span></div><div class="c" style="left:159px;top:307px;">L</div><div class="c" style="left:58px;top:332px;"><span class="k">제작사</span></div><div class="c" style="left:159px;top:332px;">M</div><div class="c" style="left:58px;top:357px;"><span class="k">배급사</span></div><div class="c" style="left:159px;top:357px;">N</div><div class="c" style="left:58px;top:382px;"><span class="k">등급</span></div><div class="c" style="left:159px;top:382px;">O</div><div class="c" style="left:58px;top:407px;"><span class="k">장르</span></div><div class="c" style="left:159px;top:407px;">P</div><div class="c" style="left:58px;top:432px;"><span class="k">감독</span></div><div class="c" style="left:159px;top:432px;">Q</div><div class="c" style="left:58px;top:457px;"><span class="k">배우</span></div><div class="c" style="left:159px;top:457px;">R</div><div class="c" style="left:58px;top:482px;"><span class="k">월</span></div><div class="c" style="left:159px;top:482px;">S</div><div class="c" style="left:58px;top:507px;"><span class="k">일</span></div><div class="c" style="left:159px;top:507px;">T</div><div class="c" style="left:58px;top:532px;"><span class="k">주</span></div><div class="c" style="left:159px;top:532px;">U</div><div class="c" style="left:58px;top:557px;"><span class="k">개봉년도</span></div><div class="c" style="left:159px;top:557px;">V</div><div class="c" style="left:58px;top:582px;"><span class="k">개봉월</span></div><div class="c" style="left:159px;top:582px;">W</div>
<div class="c" style="left:275px;top:32px;font-size:16.25px">select C, sum(G), sum(E), max(D), max(V) group by C order by sum(G) desc limit 100</div><div class="c r" style="left:236px;top:82px;width:38px"><span class="k">순위</span></div><div class="c" style="left:275px;top:82px;"><span class="k">영화명</span></div><div class="c" style="left:463px;top:82px;">sum <span class="k">관객수</span></div><div class="c" style="left:589px;top:82px;">sum <span class="k">매출액</span></div><div class="c" style="left:722px;top:82px;">max <span class="k">개봉일</span></div><div class="c" style="left:848px;top:82px;">max <span class="k">개봉년도</span></div><div class="c" style="left:958px;top:82px;"><span class="k">개봉요일</span></div>
<div class="c r" style="left:236px;top:107px;width:38px">1</div><div class="c" style="left:275px;top:107px;"><span class="k">신과함께</span>-<span class="k">인과</span> <span class="k">연</span></div><div class="c r" style="left:463px;top:107px;width:125px">12,274,996</div><div class="c r" style="left:589px;top:107px;width:132px">102,666,146,909</div><div class="c r" style="left:722px;top:107px;width:125px">2018-08-01</div><div class="c r" style="left:848px;top:107px;width:109px">2018</div><div class="c r" style="left:958px;top:107px;width:74px">4</div>
<div class="c r" style="left:236px;top:132px;width:38px">2</div><div class="c" style="left:275px;top:132px;"><span class="k">어벤져스</span>: <span class="k">인피니티</span> <span class="k">워</span></div><div class="c r" style="left:463px;top:132px;width:125px">11,212,710</div><div class="c r" style="left:589px;top:132px;width:132px">99,926,399,769</div><div class="c r" style="left:722px;top:132px;width:125px">2018-04-25</div><div class="c r" style="left:848px;top:132px;width:109px">2018</div><div class="c r" style="left:958px;top:132px;width:74px">4</div>
<div class="c r" style="left:236px;top:157px;width:38px">3</div><div class="c" style="left:275px;top:157px;"><span class="k">보헤미안</span> <span class="k">랩소디</span></div><div class="c r" style="left:463px;top:157px;width:125px">9,224,557</div><div class="c r" style="left:589px;top:157px;width:132px">80,010,284,745</div><div class="c r" style="left:722px;top:157px;width:125px">2018-10-31</div><div class="c r" style="left:848px;top:157px;width:109px">2018</div><div class="c r" style="left:958px;top:157px;width:74px">4</div>
<div class="c r" style="left:236px;top:182px;width:38px">4</div><div class="c" style="left:275px;top:182px;"><span class="k">미션</span> <span class="k">임파서블</span>: <span class="k">폴아웃</span></div><div class="c r" style="left:463px;top:182px;width:125px">6,584,915</div><div class="c r" style="left:589px;top:182px;width:132px">55,888,375,112</div><div class="c r" style="left:722px;top:182px;width:125px">2018-07-25</div><div class="c r" style="left:848px;top:182px;width:109px">2018</div><div class="c r" style="left:958px;top:182px;width:74px">4</div>
<div class="c r" style="left:236px;top:207px;width:38px">5</div><div class="c" style="left:275px;top:207px;"><span class="k">신과함께</span>-<span class="k">죄와</span> <span class="k">벌</span></div><div class="c r" style="left:463px;top:207px;width:125px">5,872,180</div><div class="c r" style="left:589px;top:207px;width:132px">47,356,539,705</div><div class="c r" style="left:722px;top:207px;width:125px">2017-12-20</div><div class="c r" style="left:848px;top:207px;width:109px">2017</div><div class="c r" style="left:958px;top:207px;width:74px">4</div>
<div class="c r" style="left:236px;top:232px;width:38px">6</div><div class="c" style="left:275px;top:232px;"><span class="k">쥬라기</span> <span class="k">월드</span>: <span class="k">폴른</span> <span class="k">킹덤</span></div><div class="c r" style="left:463px;top:232px;width:125px">5,661,128</div><div class="c r" style="left:589px;top:232px;width:132px">49,770,711,037</div><div class="c r" style="left:722px;top:232px;width:125px">2018-06-06</div><div class="c r" style="left:848px;top:232px;width:109px">2018</div><div class="c r" style="left:958px;top:232px;width:74px">4</div>
<div class="c r" style="left:236px;top:257px;width:38px">7</div><div class="c" style="left:275px;top:257px;"><span class="k">앤트맨과</span> <span class="k">와스프</span></div><div class="c r" style="left:463px;top:257px;width:125px">5,448,134</div><div class="c r" style="left:589px;top:257px;width:132px">47,468,053,685</div><div class="c r" style="left:722px;top:257px;width:125px">2018-07-04</div><div class="c r" style="left:848px;top:257px;width:109px">2018</div><div class="c r" style="left:958px;top:257px;width:74px">4</div>
<div class="c r" style="left:236px;top:282px;width:38px">8</div><div class="c" style="left:275px;top:282px;"><span class="k">안시성</span></div><div class="c r" style="left:463px;top:282px;width:125px">5,440,186</div><div class="c r" style="left:589px;top:282px;width:132px">46,335,334,026</div><div class="c r" style="left:722px;top:282px;width:125px">2018-09-19</div><div class="c r" style="left:848px;top:282px;width:109px">2018</div><div class="c r" style="left:958px;top:282px;width:74px">4</div>
<div class="c r" style="left:236px;top:307px;width:38px">9</div><div class="c" style="left:275px;top:307px;"><span class="k">블랙</span> <span class="k">팬서</span></div><div class="c r" style="left:463px;top:307px;width:125px">5,399,227</div><div class="c r" style="left:589px;top:307px;width:132px">45,885,123,957</div><div class="c r" style="left:722px;top:307px;width:125px">2018-02-14</div><div class="c r" style="left:848px;top:307px;width:109px">2018</div><div class="c r" style="left:958px;top:307px;width:74px">4</div>
<div class="c r" style="left:236px;top:332px;width:38px">10</div><div class="c" style="left:275px;top:332px;"><span class="k">완벽한</span> <span class="k">타인</span></div><div class="c r" style="left:463px;top:332px;width:125px">5,293,387</div><div class="c r" style="left:589px;top:332px;width:132px">44,350,435,074</div><div class="c r" style="left:722px;top:332px;width:125px">2018-10-31</div><div class="c r" style="left:848px;top:332px;width:109px">2018</div><div class="c r" style="left:958px;top:332px;width:74px">4</div>
<div class="c r" style="left:236px;top:357px;width:38px">11</div><div class="c" style="left:275px;top:357px;">1987</div><div class="c r" style="left:463px;top:357px;width:125px">5,290,442</div><div class="c r" style="left:589px;top:357px;width:132px">42,916,501,108</div><div class="c r" style="left:722px;top:357px;width:125px">2017-12-27</div><div class="c r" style="left:848px;top:357px;width:109px">2017</div><div class="c r" style="left:958px;top:357px;width:74px">4</div>
<div class="c r" style="left:236px;top:382px;width:38px">12</div><div class="c" style="left:275px;top:382px;"><span class="k">독전</span></div><div class="c r" style="left:463px;top:382px;width:125px">5,063,684</div><div class="c r" style="left:589px;top:382px;width:132px">43,485,551,113</div><div class="c r" style="left:722px;top:382px;width:125px">2018-05-22</div><div class="c r" style="left:848px;top:382px;width:109px">2018</div><div class="c r" style="left:958px;top:382px;width:74px">3</div>
<div class="c r" style="left:236px;top:407px;width:38px">13</div><div class="c" style="left:275px;top:407px;"><span class="k">공작</span></div><div class="c r" style="left:463px;top:407px;width:125px">4,974,524</div><div class="c r" style="left:589px;top:407px;width:132px">42,788,883,176</div><div class="c r" style="left:722px;top:407px;width:125px">2018-08-08</div><div class="c r" style="left:848px;top:407px;width:109px">2018</div><div class="c r" style="left:958px;top:407px;width:74px">4</div>
<div class="c r" style="left:236px;top:432px;width:38px">14</div><div class="c" style="left:275px;top:432px;"><span class="k">베놈</span></div><div class="c r" style="left:463px;top:432px;width:125px">3,888,096</div><div class="c r" style="left:589px;top:432px;width:132px">34,100,211,207</div><div class="c r" style="left:722px;top:432px;width:125px">2018-10-03</div><div class="c r" style="left:848px;top:432px;width:109px">2018</div><div class="c r" style="left:958px;top:432px;width:74px">4</div>
<div class="c r" style="left:236px;top:457px;width:38px">15</div><div class="c" style="left:275px;top:457px;"><span class="k">암수살인</span></div><div class="c r" style="left:463px;top:457px;width:125px">3,789,321</div><div class="c r" style="left:589px;top:457px;width:132px">32,995,138,548</div><div class="c r" style="left:722px;top:457px;width:125px">2018-10-03</div><div class="c r" style="left:848px;top:457px;width:109px">2018</div><div class="c r" style="left:958px;top:457px;width:74px">4</div>
<div class="c r" style="left:236px;top:482px;width:38px">16</div><div class="c" style="left:275px;top:482px;"><span class="k">데드풀</span> 2</div><div class="c r" style="left:463px;top:482px;width:125px">3,784,602</div><div class="c r" style="left:589px;top:482px;width:132px">34,185,664,639</div><div class="c r" style="left:722px;top:482px;width:125px">2018-05-16</div><div class="c r" style="left:848px;top:482px;width:109px">2018</div><div class="c r" style="left:958px;top:482px;width:74px">4</div>
<div class="c r" style="left:236px;top:507px;width:38px">17</div><div class="c" style="left:275px;top:507px;"><span class="k">국가부도의</span> <span class="k">날</span></div><div class="c r" style="left:463px;top:507px;width:125px">3,747,443</div><div class="c r" style="left:589px;top:507px;width:132px">30,841,987,737</div><div class="c r" style="left:722px;top:507px;width:125px">2018-11-28</div><div class="c r" style="left:848px;top:507px;width:109px">2018</div><div class="c r" style="left:958px;top:507px;width:74px">4</div>
<div class="c r" style="left:236px;top:532px;width:38px">18</div><div class="c" style="left:275px;top:532px;"><span class="k">코코</span></div><div class="c r" style="left:463px;top:532px;width:125px">3,510,040</div><div class="c r" style="left:589px;top:532px;width:132px">27,685,609,440</div><div class="c r" style="left:722px;top:532px;width:125px">2018-01-11</div><div class="c r" style="left:848px;top:532px;width:109px">2018</div><div class="c r" style="left:958px;top:532px;width:74px">5</div>
<div class="c r" style="left:236px;top:557px;width:38px">19</div><div class="c" style="left:275px;top:557px;"><span class="k">아쿠아맨</span></div><div class="c r" style="left:463px;top:557px;width:125px">3,491,887</div><div class="c r" style="left:589px;top:557px;width:132px">30,454,584,381</div><div class="c r" style="left:722px;top:557px;width:125px">2018-12-19</div><div class="c r" style="left:848px;top:557px;width:109px">2018</div><div class="c r" style="left:958px;top:557px;width:74px">4</div>
<div class="c r" style="left:236px;top:582px;width:38px">20</div><div class="c" style="left:275px;top:582px;"><span class="k">그것만이</span> <span class="k">내</span> <span class="k">세상</span></div><div class="c r" style="left:463px;top:582px;width:125px">3,419,376</div><div class="c r" style="left:589px;top:582px;width:132px">27,451,017,382</div><div class="c r" style="left:722px;top:582px;width:125px">2018-01-17</div><div class="c r" style="left:848px;top:582px;width:109px">2018</div><div class="c r" style="left:958px;top:582px;width:74px">4</div>
<div class="c r" style="left:236px;top:607px;width:38px">21</div><div class="c" style="left:275px;top:607px;"><span class="k">마녀</span></div><div class="c r" style="left:463px;top:607px;width:125px">3,189,091</div><div class="c r" style="left:589px;top:607px;width:132px">27,242,029,463</div><div class="c r" style="left:722px;top:607px;width:125px">2018-06-27</div><div class="c r" style="left:848px;top:607px;width:109px">2018</div><div class="c r" style="left:958px;top:607px;width:74px">4</div>
<div class="c r" style="left:236px;top:632px;width:38px">22</div><div class="c" style="left:275px;top:632px;"><span class="k">탐정</span>: <span class="k">리턴즈</span></div><div class="c r" style="left:463px;top:632px;width:125px">3,152,872</div><div class="c r" style="left:589px;top:632px;width:132px">26,909,459,678</div><div class="c r" style="left:722px;top:632px;width:125px">2018-06-13</div><div class="c r" style="left:848px;top:632px;width:109px">2018</div><div class="c r" style="left:958px;top:632px;width:74px">4</div>
<div class="c r" style="left:236px;top:657px;width:38px">23</div><div class="c" style="left:275px;top:657px;"><span class="k">인크레더블</span> 2</div><div class="c r" style="left:463px;top:657px;width:125px">3,033,052</div><div class="c r" style="left:589px;top:657px;width:132px">24,554,683,588</div><div class="c r" style="left:722px;top:657px;width:125px">2018-07-18</div><div class="c r" style="left:848px;top:657px;width:109px">2018</div><div class="c r" style="left:958px;top:657px;width:74px">4</div>
<div class="c r" style="left:236px;top:682px;width:38px">24</div><div class="c" style="left:275px;top:682px;"><span class="k">서치</span></div><div class="c r" style="left:463px;top:682px;width:125px">2,949,944</div><div class="c r" style="left:589px;top:682px;width:132px">25,283,364,845</div><div class="c r" style="left:722px;top:682px;width:125px">2018-08-29</div><div class="c r" style="left:848px;top:682px;width:109px">2018</div><div class="c r" style="left:958px;top:682px;width:74px">4</div>
<div class="c r" style="left:236px;top:707px;width:38px">25</div><div class="c" style="left:275px;top:707px;"><span class="k">너의</span> <span class="k">결혼식</span></div><div class="c r" style="left:463px;top:707px;width:125px">2,820,969</div><div class="c r" style="left:589px;top:707px;width:132px">23,676,244,369</div><div class="c r" style="left:722px;top:707px;width:125px">2018-08-22</div><div class="c r" style="left:848px;top:707px;width:109px">2018</div><div class="c r" style="left:958px;top:707px;width:74px">4</div>
<div class="c r" style="left:236px;top:732px;width:38px">26</div><div class="c" style="left:275px;top:732px;"><span class="k">곤지암</span></div><div class="c r" style="left:463px;top:732px;width:125px">2,675,575</div><div class="c r" style="left:589px;top:732px;width:132px">21,442,194,144</div><div class="c r" style="left:722px;top:732px;width:125px">2018-03-28</div><div class="c r" style="left:848px;top:732px;width:109px">2018</div><div class="c r" style="left:958px;top:732px;width:74px">4</div>
<div class="c r" style="left:236px;top:757px;width:38px">27</div><div class="c" style="left:275px;top:757px;"><span class="k">지금</span> <span class="k">만나러</span> <span class="k">갑니다</span></div><div class="c r" style="left:463px;top:757px;width:125px">2,602,273</div><div class="c r" style="left:589px;top:757px;width:132px">20,800,916,128</div><div class="c r" style="left:722px;top:757px;width:125px">2018-03-14</div><div class="c r" style="left:848px;top:757px;width:109px">2018</div><div class="c r" style="left:958px;top:757px;width:74px">4</div>
<div class="c" style="left:1059px;top:57px;"><span class="k">개봉요일</span></div><div class="c" style="left:1134px;top:57px;"><span class="k">요일</span></div><div class="c" style="left:1198px;top:57px;"><span class="k">몇번</span></div><div class="c" style="left:1249px;top:57px;"><span class="k">비율</span></div><div class="c r" style="left:1059px;top:82px;width:74px">3</div><div class="c" style="left:1134px;top:82px;"><span class="k">화요일</span></div><div class="c r" style="left:1198px;top:82px;width:50px">6</div><div class="c r" style="left:1249px;top:82px;width:63px">6.00%</div><div class="c r" style="left:1059px;top:107px;width:74px">4</div><div class="c" style="left:1134px;top:107px;"><span class="k">수요일</span></div><div class="c r" style="left:1198px;top:107px;width:50px">73</div><div class="c r" style="left:1249px;top:107px;width:63px">73.00%</div><div class="c r" style="left:1059px;top:132px;width:74px">5</div><div class="c" style="left:1134px;top:132px;"><span class="k">금요일</span></div><div class="c r" style="left:1198px;top:132px;width:50px">21</div><div class="c r" style="left:1249px;top:132px;width:63px">21.00%</div><div class="c r" style="left:1198px;top:157px;width:50px">100</div>
<div class="a" style="left:273px;top:81px;width:190px;height:26px;border:2px solid #4285f4"></div><div class="a" style="left:456.500px;top:101.5px;width:8.500px;height:8px;background:#4285f4;border:1px solid #fff;border-right:none;border-bottom:none"></div></div>
<div class="a" style="left:1039px;top:336px;width:639px;height:578px;background:#fff;border:1px solid #9e9e9e"></div>
<svg class="ic" style="left:1039px;top:336px" width="639" height="578" viewBox="1039 336 639 578" font-family="Liberation Sans, Noto Sans CJK KR, sans-serif">
<g font-weight="bold" font-size="25" fill="#757575"><text x="1068.5" y="386.5" textLength="57" lengthAdjust="spacingAndGlyphs">2018</text><text x="1126" y="386.5" font-size="25.5">년</text><text x="1157.5" y="386.5" textLength="41" lengthAdjust="spacingAndGlyphs">Top</text><text x="1205" y="386.5" textLength="28" lengthAdjust="spacingAndGlyphs">20</text><text x="1240" y="386.5" font-size="25.5" letter-spacing=".4">영화</text><text x="1296" y="386.5" font-size="25.5">총</text><text x="1326.500" y="386.5" font-size="25.5" letter-spacing="1.4">관객수,</text><text x="1415.300" y="386.5" font-size="25.5" letter-spacing="1.6">매출액</text></g>
<rect x="1245" y="411" width="15" height="15" rx="1.5" fill="#4285f4"/><rect x="1368" y="416" width="15" height="5" fill="#db4437"/><g font-size="15" fill="#757575"><text x="1270.5" y="423.1" textLength="30" lengthAdjust="spacingAndGlyphs">sum</text><text x="1304.5" y="423.1" font-size="15.6">관객수</text><text x="1393.5" y="423.1" textLength="30" lengthAdjust="spacingAndGlyphs">sum</text><text x="1427.5" y="423.1" font-size="15.6">매출액</text></g>
<rect x="1139.5" y="744.35" width="410" height="1.1" fill="#e6e6e6"/><rect x="1139.5" y="721.85" width="410" height="1.1" fill="#c4c4c4"/><rect x="1139.5" y="699.35" width="410" height="1.1" fill="#e6e6e6"/><rect x="1139.5" y="676.85" width="410" height="1.1" fill="#c4c4c4"/><rect x="1139.5" y="654.35" width="410" height="1.1" fill="#e6e6e6"/><rect x="1139.5" y="631.85" width="410" height="1.1" fill="#c4c4c4"/><rect x="1139.5" y="609.35" width="410" height="1.1" fill="#e6e6e6"/><rect x="1139.5" y="586.85" width="410" height="1.1" fill="#c4c4c4"/><rect x="1139.5" y="564.35" width="410" height="1.1" fill="#e6e6e6"/><rect x="1139.5" y="541.85" width="410" height="1.1" fill="#c4c4c4"/><rect x="1139.5" y="519.35" width="410" height="1.1" fill="#e6e6e6"/><rect x="1139.5" y="496.85" width="410" height="1.1" fill="#c4c4c4"/><rect x="1139.5" y="474.35" width="410" height="1.1" fill="#e6e6e6"/><rect x="1139.5" y="451.85" width="410" height="1.1" fill="#c4c4c4"/>
<g font-size="15.3" fill="#4285f4" text-anchor="end"><text x="1131.3" y="771.1" letter-spacing="-.4">0</text><text x="1131.3" y="726.3" letter-spacing="-.4">2</text><text x="1131.3" y="681.4" letter-spacing="-.4">4</text><text x="1131.3" y="636.6" letter-spacing="-.4">6</text><text x="1131.3" y="591.7" letter-spacing="-.4">8</text><text x="1131.3" y="546.9" letter-spacing="-.4">10</text><text x="1131.3" y="502.1" letter-spacing="-.4">12</text><text x="1131.3" y="457.2" letter-spacing="-.4">14</text></g>
<g font-size="15.3" fill="#d23030"><text x="1556.8" y="771.1" letter-spacing="-.3">0</text><text x="1556.8" y="708.3" letter-spacing="-.3">25,000</text><text x="1556.8" y="645.5" letter-spacing="-.3">50,000</text><text x="1556.8" y="582.8" letter-spacing="-.3">75,000</text><text x="1556.8" y="520.0" letter-spacing="-.3">100,000</text><text x="1556.8" y="457.2" letter-spacing="-.3">125,000</text></g>
<g fill="#4285f4"><path d="M1146.1 767.4V493.8Q1146.1 491.6 1148.3 491.6H1156.7Q1158.9 491.6 1158.9 493.8V767.4z"/><path d="M1166.2 767.4V517.7Q1166.2 515.5 1168.4 515.5H1176.8Q1179.0 515.5 1179.0 517.7V767.4z"/><path d="M1186.3 767.4V562.4Q1186.3 560.2 1188.5 560.2H1196.9Q1199.1 560.2 1199.1 562.4V767.4z"/><path d="M1206.4 767.4V621.8Q1206.4 619.6 1208.6 619.6H1217.0Q1219.2 619.6 1219.2 621.8V767.4z"/><path d="M1226.5 767.4V637.9Q1226.5 635.7 1228.7 635.7H1237.1Q1239.3 635.7 1239.3 637.9V767.4z"/><path d="M1246.6 767.4V642.6Q1246.6 640.4 1248.8 640.4H1257.2Q1259.4 640.4 1259.4 642.6V767.4z"/><path d="M1266.7 767.4V647.4Q1266.7 645.2 1268.9 645.2H1277.3Q1279.5 645.2 1279.5 647.4V767.4z"/><path d="M1286.8 767.4V647.6Q1286.8 645.4 1289.0 645.4H1297.4Q1299.6 645.4 1299.6 647.6V767.4z"/><path d="M1306.9 767.4V648.5Q1306.9 646.3 1309.1 646.3H1317.5Q1319.7 646.3 1319.7 648.5V767.4z"/><path d="M1327.0 767.4V650.9Q1327.0 648.7 1329.2 648.7H1337.6Q1339.8 648.7 1339.8 650.9V767.4z"/><path d="M1347.1 767.4V651.0Q1347.1 648.8 1349.3 648.8H1357.7Q1359.9 648.8 1359.9 651.0V767.4z"/><path d="M1367.2 767.4V656.1Q1367.2 653.9 1369.4 653.9H1377.8Q1380.0 653.9 1380.0 656.1V767.4z"/><path d="M1387.3 767.4V658.1Q1387.3 655.9 1389.5 655.9H1397.9Q1400.1 655.9 1400.1 658.1V767.4z"/><path d="M1407.4 767.4V682.5Q1407.4 680.3 1409.6 680.3H1418.0Q1420.2 680.3 1420.2 682.5V767.4z"/><path d="M1427.5 767.4V684.7Q1427.5 682.5 1429.7 682.5H1438.1Q1440.3 682.5 1440.3 684.7V767.4z"/><path d="M1447.6 767.4V684.8Q1447.6 682.6 1449.8 682.6H1458.2Q1460.4 682.6 1460.4 684.8V767.4z"/><path d="M1467.7 767.4V685.7Q1467.7 683.5 1469.9 683.5H1478.3Q1480.5 683.5 1480.5 685.7V767.4z"/><path d="M1487.8 767.4V691.0Q1487.8 688.8 1490.0 688.8H1498.4Q1500.6 688.8 1500.6 691.0V767.4z"/><path d="M1507.9 767.4V691.4Q1507.9 689.2 1510.1 689.2H1518.5Q1520.7 689.2 1520.7 691.4V767.4z"/><path d="M1528.0 767.4V693.1Q1528.0 690.9 1530.2 690.9H1538.6Q1540.8 690.9 1540.8 693.1V767.4z"/></g>
<rect x="1139.5" y="766.55" width="410" height="1.4" fill="#333"/><polyline points="1152.5,508.7 1172.6,515.6 1192.7,565.8 1212.8,626.6 1232.9,648.1 1253.0,642.0 1273.1,647.8 1293.2,650.6 1313.3,651.8 1333.4,655.6 1353.5,659.3 1373.6,657.8 1393.7,659.6 1413.8,681.5 1433.9,684.3 1454.0,681.3 1474.1,689.7 1494.2,697.6 1514.3,690.7 1534.4,698.2" fill="none" stroke="#db4437" stroke-width="2.6" stroke-linejoin="round"/>
<g font-size="15.6" fill="#757575" text-anchor="middle"><text transform="translate(1081 664.5) rotate(-90)">총 관객수 (단위 백만)</text><text transform="translate(1644.2 664.5) rotate(-90)">총 매출액 (단위 백만)</text></g>
<g font-size="15.9" fill="#757575" text-anchor="end"><text transform="translate(1156.3 775.7) rotate(-90)">신과함께-인과<tspan letter-spacing="-2.100" dx=".3">...</tspan></text><text transform="translate(1176.4 775.7) rotate(-90)">어벤져스: 인피<tspan letter-spacing="-2.100" dx=".3">...</tspan></text><text transform="translate(1196.5 775.7) rotate(-90)">보헤미안 랩소디</text><text transform="translate(1216.6 775.7) rotate(-90)">미션 임파서블:<tspan letter-spacing="-2.100" dx=".3">...</tspan></text><text transform="translate(1236.7 775.7) rotate(-90)">신과함께-죄와<tspan letter-spacing="-2.100" dx=".3">...</tspan></text><text transform="translate(1256.8 775.7) rotate(-90)">쥬라기 월드:<tspan letter-spacing="-2.100" dx=".3">...</tspan></text><text transform="translate(1276.9 775.7) rotate(-90)">앤트맨과 와스프</text><text transform="translate(1297.0 775.7) rotate(-90)">안시성</text><text transform="translate(1317.1 775.7) rotate(-90)">블랙 팬서</text><text transform="translate(1337.2 775.7) rotate(-90)">완벽한 타인</text><text transform="translate(1357.3 775.7) rotate(-90)">1987</text><text transform="translate(1377.4 775.7) rotate(-90)">독전</text><text transform="translate(1397.5 775.7) rotate(-90)">공작</text><text transform="translate(1417.6 775.7) rotate(-90)">베놈</text><text transform="translate(1437.7 775.7) rotate(-90)">암수살인</text><text transform="translate(1457.8 775.7) rotate(-90)">데드풀 2</text><text transform="translate(1477.9 775.7) rotate(-90)">국가부도의 날</text><text transform="translate(1498.0 775.7) rotate(-90)">코코</text><text transform="translate(1518.1 775.7) rotate(-90)">아쿠아맨</text><text transform="translate(1538.2 775.7) rotate(-90)">그것만이 내 세<tspan letter-spacing="-2.100" dx=".3">...</tspan></text></g>
</svg>
<div class="a" style="left:1760px;top:159px;width:14px;height:771px;background:#f8f8f8;border-left:1px solid #e0e0e0"></div><div class="a" style="left:1764px;top:190px;width:9px;height:33px;background:#c1c1c1"></div><div class="a" style="left:1760px;top:892px;width:14px;height:1px;background:#dcdcdc"></div><div class="a" style="left:1760px;top:912px;width:14px;height:1px;background:#dcdcdc"></div><svg class="ic" style="left:1764px;top:899px" width="7" height="4" viewBox="0 0 10 5" preserveAspectRatio="none"><path d="M0 5h10L5 0z" fill="#999"/></svg><svg class="ic" style="left:1764px;top:920px" width="7" height="4" viewBox="0 0 10 5" preserveAspectRatio="none"><path d="M0 0h10L5 5z" fill="#999"/></svg><div class="a" style="left:0;top:930px;width:1774px;height:15px;background:#f8f8f8;border-top:1px solid #dcdcdc"></div><div class="a" style="left:0;top:930px;width:58px;height:15px;background:#f8f8f8;border-top:1px solid #d0d0d0;border-right:1px solid #d8d8d8"></div><div class="a" style="left:59px;top:933px;width:660px;height:11px;background:#c4c4c4"></div><div class="a" style="left:1722px;top:931px;width:1px;height:14px;background:#dcdcdc"></div><div class="a" style="left:1742px;top:931px;width:1px;height:14px;background:#dcdcdc"></div><div class="a" style="left:1761px;top:931px;width:1px;height:14px;background:#dcdcdc"></div><svg class="ic" style="left:1729px;top:934.5px" width="4" height="7" viewBox="0 0 5 10" preserveAspectRatio="none"><path d="M5 0v10L0 5z" fill="#999"/></svg><svg class="ic" style="left:1750px;top:934.5px" width="4" height="7" viewBox="0 0 5 10" preserveAspectRatio="none"><path d="M0 0v10L5 5z" fill="#999"/></svg>
<div class="a" style="left:0;top:945px;width:1775px;height:47px;background:#ececec;border-top:1px solid #c4c4c4"></div>
<svg class="ic" style="left:62.7px;top:959.5px" width="13" height="13" viewBox="0 0 13 13"><path d="M5.300 0h2.400v5.300H13v2.400H7.700V13H5.300V7.700H0V5.300h5.300z" fill="#555"/></svg><svg class="ic" style="left:101px;top:959.500px" width="15" height="14.600" viewBox="0 0 15 14.600"><path d="M0 0h15v2.400H0zM0 4.070h15v2.400H0zM0 8.140h15v2.400H0zM0 12.200h15v2.400H0z" fill="#555"/></svg><div class="tab" style="left:144.7px;width:71.60000000000002px"></div><div class="tt" style="left:153.6px;color:#6b6b6b">data</div><svg class="ic" style="left:198.8px;top:961.5px" width="9.3" height="4.6" viewBox="0 0 10 5" preserveAspectRatio="none"><path d="M0 0h10L5 5z" fill="#a0a0a0"/></svg>
<div class="tab" style="left:217.7px;width:190.60000000000002px"></div><div class="tt" style="left:227px;color:#6b6b6b"><span class=o>ⓟ</span> <span class="k">월간</span> <span class="k">관객수</span> <span class="k">매출</span></div><svg class="ic" style="left:389.4px;top:961.5px" width="9.3" height="4.6" viewBox="0 0 10 5" preserveAspectRatio="none"><path d="M0 0h10L5 5z" fill="#a0a0a0"/></svg>
<div class="tab" style="left:409.5px;width:125.70000000000005px"></div><div class="tt" style="left:419px;color:#6b6b6b"><span class=o>ⓟ</span> 1<span class="k">위</span> <span class="k">횟수</span></div><svg class="ic" style="left:516.8px;top:961.5px" width="9.3" height="4.6" viewBox="0 0 10 5" preserveAspectRatio="none"><path d="M0 0h10L5 5z" fill="#a0a0a0"/></svg>
<div class="tab" style="left:536.6px;width:173.0px"></div><div class="tt" style="left:546px;color:#6b6b6b"><span class=o>ⓟ</span> <span class="k">관객수</span> <span class="k">많은</span> <span class="k">순</span></div><svg class="ic" style="left:690.7px;top:961.5px" width="9.3" height="4.6" viewBox="0 0 10 5" preserveAspectRatio="none"><path d="M0 0h10L5 5z" fill="#a0a0a0"/></svg>
<div class="tab" style="left:891.4px;width:111.60000000000002px"></div><div class="tt" style="left:900.8px;color:#6b6b6b"><span class=o>ⓟ</span> <span class="k">국적별</span></div><svg class="ic" style="left:984.7px;top:961.5px" width="9.3" height="4.6" viewBox="0 0 10 5" preserveAspectRatio="none"><path d="M0 0h10L5 5z" fill="#a0a0a0"/></svg>
<div class="tab" style="left:1004.4px;width:237.69999999999993px"></div><div class="tt" style="left:1014.4px;color:#6b6b6b"><span class=o>ⓠ</span> Top 1 <span class="k">영화</span> <span class="k">주간</span> <span class="k">관객수</span></div><svg class="ic" style="left:1224px;top:961.5px" width="9.3" height="4.6" viewBox="0 0 10 5" preserveAspectRatio="none"><path d="M0 0h10L5 5z" fill="#a0a0a0"/></svg>
<div class="tab" style="left:1243.5px;width:176.5px"></div><div class="tt" style="left:1253.7px;color:#6b6b6b"><span class=o>ⓠ</span> <span class="k">영화별</span> <span class="k">주간</span> <span class="k">관객수</span></div><svg class="ic" style="left:1400px;top:961.5px" width="9.3" height="4.6" viewBox="0 0 10 5" preserveAspectRatio="none"><path d="M0 0h10L5 5z" fill="#a0a0a0"/></svg>
<div class="a" style="left:1351px;top:946px;width:8px;height:41px;background:rgba(216,216,216,.6)"></div><div class="a" style="left:1359px;top:946px;width:235px;height:46px;background:#ececec"></div><div class="a" style="left:0;top:945px;width:1775px;height:1px;background:#bdbdbd"></div><div class="tab on" style="left:711px;width:179px"></div><div class="tt" style="left:720.4px;color:#222"><span class=o>ⓠ</span> <span class="k">관객수</span> <b>Top 100</b></div><svg class="ic" style="left:872px;top:961.5px" width="9.3" height="4.6" viewBox="0 0 10 5" preserveAspectRatio="none"><path d="M0 0h10L5 5z" fill="#aaa"/></svg>
<svg class="ic" style="left:1377.5px;top:959px" width="6.8" height="13.4" viewBox="9.00 7.00 5.00 10.00" preserveAspectRatio="none"><path d="M14 7l-5 5 5 5z" fill="#666"/></svg><svg class="ic" style="left:1416.8px;top:959px" width="6.8" height="13.4" viewBox="10.00 7.00 5.00 10.00" preserveAspectRatio="none"><path d="M10 17l5-5-5-5z" fill="#666"/></svg><div class="a" style="left:1593px;top:946px;width:112px;height:46px;background:#fcfcfc;border-left:1px solid #d4d4d4;border-right:1px solid #d4d4d4"></div><svg class="ic" style="left:1608px;top:957px" width="23" height="25.500" viewBox="0 0 23 25.500"><path d="M2.500 0H20.500A2.500 2.500 0 0 1 23 2.500V19.500A2.500 2.500 0 0 1 20.500 22H14.500L11.500 25.500 8.500 22H2.500A2.500 2.500 0 0 1 0 19.500V2.500A2.500 2.500 0 0 1 2.500 0z" fill="#17a05d"/><path d="M11.500 4C12.300 8.500 13.500 10 18.500 11 13.500 12 12.300 13.500 11.500 18 10.700 13.500 9.500 12 4.500 11 9.500 10 10.700 8.500 11.500 4z" fill="#fff"/></svg><div class="t" style="left:1649px;top:957px;height:26px;line-height:26px;font-size:15.5px;color:#0f9d58">탐색</div><svg class="ic" style="left:1738.4px;top:965.8px" width="7.9" height="11.5" viewBox="8.00 6.00 7.41 12.00" preserveAspectRatio="none"><path d="M15.41 7.41L14 6l-6 6 6 6 1.41-1.41L10.83 12z" fill="#444"/></svg><div class="a" style="left:1774px;top:0;width:1px;height:992px;background:#5a6a78"></div>
</body></html>
